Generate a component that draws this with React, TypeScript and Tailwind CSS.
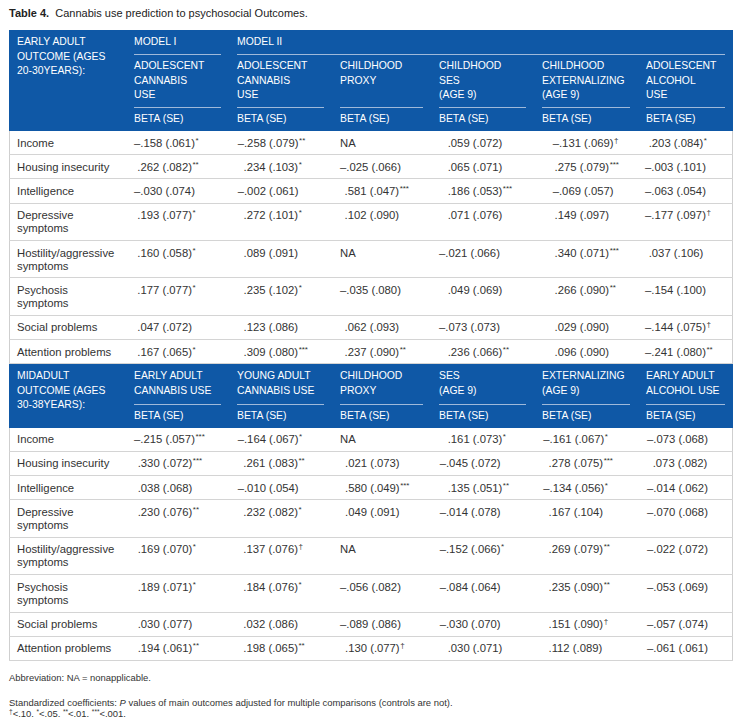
import React from "react";

type Cell = string;

const GRID = "grid grid-cols-[117px_103px_103px_99px_103px_104px_95px]";

const sec1Rows: [string, Cell[]][] = [
  ["Income", ["–.158 (.061)*", "–.258 (.079)**", "NA", ".059 (.072)", "–.131 (.069)†", ".203 (.084)*"]],
  ["Housing insecurity", [".262 (.082)**", ".234 (.103)*", "–.025 (.066)", ".065 (.071)", ".275 (.079)***", "–.003 (.101)"]],
  ["Intelligence", ["–.030 (.074)", "–.002 (.061)", ".581 (.047)***", ".186 (.053)***", "–.069 (.057)", "–.063 (.054)"]],
  ["Depressive symptoms", [".193 (.077)*", ".272 (.101)*", ".102 (.090)", ".071 (.076)", ".149 (.097)", "–.177 (.097)†"]],
  ["Hostility/aggressive symptoms", [".160 (.058)*", ".089 (.091)", "NA", "–.021 (.066)", ".340 (.071)***", ".037 (.106)"]],
  ["Psychosis symptoms", [".177 (.077)*", ".235 (.102)*", "–.035 (.080)", ".049 (.069)", ".266 (.090)**", "–.154 (.100)"]],
  ["Social problems", [".047 (.072)", ".123 (.086)", ".062 (.093)", "–.073 (.073)", ".029 (.090)", "–.144 (.075)†"]],
  ["Attention problems", [".167 (.065)*", ".309 (.080)***", ".237 (.090)**", ".236 (.066)**", ".096 (.090)", "–.241 (.080)**"]],
];

const sec2Rows: [string, Cell[]][] = [
  ["Income", ["–.215 (.057)***", "–.164 (.067)*", "NA", ".161 (.073)*", "–.161 (.067)*", "–.073 (.068)"]],
  ["Housing insecurity", [".330 (.072)***", ".261 (.083)**", ".021 (.073)", "–.045 (.072)", ".278 (.075)***", ".073 (.082)"]],
  ["Intelligence", [".038 (.068)", "–.010 (.054)", ".580 (.049)***", ".135 (.051)**", "–.134 (.056)*", "–.014 (.062)"]],
  ["Depressive symptoms", [".230 (.076)**", ".232 (.082)*", ".049 (.091)", "–.014 (.078)", ".167 (.104)", "–.070 (.068)"]],
  ["Hostility/aggressive symptoms", [".169 (.070)*", ".137 (.076)†", "NA", "–.152 (.066)*", ".269 (.079)**", "–.022 (.072)"]],
  ["Psychosis symptoms", [".189 (.071)*", ".184 (.076)*", "–.056 (.082)", "–.084 (.064)", ".235 (.090)**", "–.053 (.069)"]],
  ["Social problems", [".030 (.077)", ".032 (.086)", "–.089 (.086)", "–.030 (.070)", ".151 (.090)†", "–.057 (.074)"]],
  ["Attention problems", [".194 (.061)**", ".198 (.065)**", ".130 (.077)†", ".030 (.071)", ".112 (.089)", "–.061 (.061)"]],
];

// [negative/NA offset, positive offset] per column (px beyond 8px padding)
const sec1Off: [number, number][] = [
  [0, 3.3],
  [0.7, 6.5],
  [0, 4.5],
  [0, 8.7],
  [10.7, 12.5],
  [-1, 2.7],
];
const sec2Off: [number, number][] = [
  [0, 3.7],
  [0.7, 6.3],
  [0, 5],
  [0.7, 8.7],
  [1.3, 6.5],
  [1, 6.7],
];

function Value({ text }: { text: string }) {
  const m = text.match(/^(.*?\))([*†]*)$/);
  const main = m ? m[1] : text;
  const sup = m ? m[2] : "";
  return (
    <span className="whitespace-nowrap">
      {main}
      {sup && <sup className="text-[8px] ml-[0.5px]">{sup}</sup>}
    </span>
  );
}

function BodyRows({ rows, off }: { rows: [string, Cell[]][]; off: [number, number][] }) {
  return (
    <div className="shadow-[inset_1px_0_0_#cfcfcf,inset_-1px_0_0_#cfcfcf]">
      {rows.map(([label, cells], i) => (
        <div
          key={i}
          className={`${GRID} border-b border-[#d4d4d4] text-[11.3px] leading-[13.2px] text-[#333]`}
        >
          <div className="pl-2 pr-2 pt-[5.5px] pb-[4.5px]">{label}</div>
          {cells.map((c, j) => {
            const pos = c.startsWith(".");
            const dx = pos ? off[j][1] : off[j][0];
            return (
              <div key={j} className="pr-1 pt-[5.5px] pb-[4.5px]" style={{ paddingLeft: 8 + dx }}>
                <Value text={c} />
              </div>
            );
          })}
        </div>
      ))}
    </div>
  );
}

function HLine({ children, className = "" }: { children: React.ReactNode; className?: string }) {
  return <div className={`h-full border-b border-[#9fb9da] ${className}`}>{children}</div>;
}

export default function App() {
  const sec1Names = [
    ["ADOLESCENT", "CANNABIS", "USE"],
    ["ADOLESCENT", "CANNABIS", "USE"],
    ["CHILDHOOD", "PROXY"],
    ["CHILDHOOD", "SES", "(AGE 9)"],
    ["CHILDHOOD", "EXTERNALIZING", "(AGE 9)"],
    ["ADOLESCENT", "ALCOHOL", "USE"],
  ];
  const sec2Names = [
    ["EARLY ADULT", "CANNABIS USE"],
    ["YOUNG ADULT", "CANNABIS USE"],
    ["CHILDHOOD", "PROXY"],
    ["SES", "(AGE 9)"],
    ["EXTERNALIZING", "(AGE 9)"],
    ["EARLY ADULT", "ALCOHOL USE"],
  ];
  return (
    <div
      className="w-[742px] h-[725px] bg-white px-[9px] overflow-hidden"
      style={{ fontFamily: '"Liberation Sans", Arial, Helvetica, sans-serif' }}
    >
      <div className="pt-[6px] text-[11px] leading-[14px] text-[#222]">
        <span className="font-bold">Table 4.</span>
        <span>&nbsp; Cannabis use prediction to psychosocial Outcomes.</span>
      </div>

      <div className="mt-[10px] w-[724px]">
        {/* Section 1 header */}
        <div className={`${GRID} bg-[#0f58a6] text-white text-[10.4px] leading-[14.5px]`}>
          <div className="row-span-3 px-2 pt-[5px] whitespace-nowrap">
            EARLY ADULT
            <br />
            OUTCOME (AGES
            <br />
            20-30YEARS):
          </div>
          <div className="px-2">
            <HLine className="pt-[5px] pb-[4px]">MODEL I</HLine>
          </div>
          <div className="col-span-5 px-2">
            <HLine className="pt-[5px] pb-[4px]">MODEL II</HLine>
          </div>
          {sec1Names.map((n, i) => (
            <div key={i} className="px-2">
              <HLine className="pt-[4.5px] pb-[4.5px] whitespace-nowrap">
                {n.map((l, k) => (
                  <div key={k}>{l}</div>
                ))}
              </HLine>
            </div>
          ))}
          {sec1Names.map((_, i) => (
            <div key={i} className="px-2 pt-[4px] pb-[4.5px]">
              BETA (SE)
            </div>
          ))}
        </div>
        <BodyRows rows={sec1Rows} off={sec1Off} />

        {/* Section 2 header */}
        <div className={`${GRID} bg-[#0f58a6] text-white text-[10.4px] leading-[14.5px]`}>
          <div className="row-span-2 px-2 pt-[5px] whitespace-nowrap">
            MIDADULT
            <br />
            OUTCOME (AGES
            <br />
            30-38YEARS):
          </div>
          {sec2Names.map((n, i) => (
            <div key={i} className="px-2">
              <HLine className="pt-[5px] pb-[5.5px] whitespace-nowrap">
                {n.map((l, k) => (
                  <div key={k}>{l}</div>
                ))}
              </HLine>
            </div>
          ))}
          {sec2Names.map((_, i) => (
            <div key={i} className="px-2 pt-[4px] pb-[4.5px]">
              BETA (SE)
            </div>
          ))}
        </div>
        <BodyRows rows={sec2Rows} off={sec2Off} />
      </div>

      <div className="text-[9.45px] leading-[12px] text-[#333]">
        <div className="mt-[11px]">Abbreviation: NA = nonapplicable.</div>
        <div className="mt-[13px]">
          Standardized coefficients: <i>P</i> values of main outcomes adjusted for multiple comparisons (controls are not).
        </div>
        <div className="-mt-[0.5px]">
          <sup className="text-[6.5px]">†</sup>&lt;.10. <sup className="text-[6.5px]">*</sup>&lt;.05.{" "}
          <sup className="text-[6.5px]">**</sup>&lt;.01. <sup className="text-[6.5px]">***</sup>&lt;.001.
        </div>
      </div>
    </div>
  );
}
